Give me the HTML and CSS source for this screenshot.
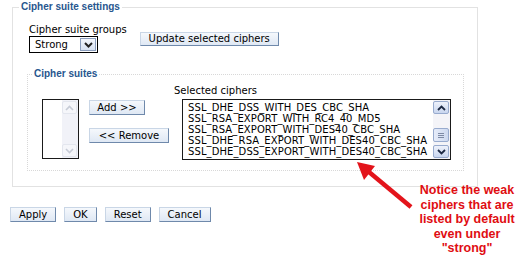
FILE: index.html
```html
<!DOCTYPE html>
<html lang="en">
<head>
    <meta charset="UTF-8">
    <title>SSL configuration - Cipher suites</title>
    <link rel="stylesheet" href="styles.css">
</head>
<body>

<div class="page">
    <fieldset class="group group-outer">
        <legend>Cipher suite settings</legend>

        <div class="group-row">
            <div class="field">
                <div class="field-label">Cipher suite groups</div>
                <div class="dropdown">
                    <span class="dropdown-value">Strong</span>
                    <span class="dropdown-btn">
                        <svg width="9" height="6" viewBox="0 0 9 6"><path d="M1 1 L4.5 4.5 L8 1" fill="none" stroke="#222" stroke-width="2"/></svg>
                    </span>
                </div>
            </div>
            <button class="btn btn-update">Update selected ciphers</button>
        </div>

        <fieldset class="group group-inner">
            <legend>Cipher suites</legend>
            <div class="suites">
                <div class="listbox listbox-available">
                    <div class="listbox-items"></div>
                    <div class="scrollbar scrollbar-disabled">
                        <span class="scroll-btn">
                            <svg width="9" height="6" viewBox="0 0 9 6"><path d="M1 5 L4.5 1.5 L8 5" fill="none" stroke="#c6cbd6" stroke-width="1.6"/></svg>
                        </span>
                        <span class="scroll-track"></span>
                        <span class="scroll-btn">
                            <svg width="9" height="6" viewBox="0 0 9 6"><path d="M1 1 L4.5 4.5 L8 1" fill="none" stroke="#c6cbd6" stroke-width="1.6"/></svg>
                        </span>
                    </div>
                </div>

                <div class="move-buttons">
                    <button class="btn btn-add">Add &gt;&gt;</button>
                    <button class="btn btn-remove">&lt;&lt; Remove</button>
                </div>

                <div class="selected">
                    <div class="field-label">Selected ciphers</div>
                    <div class="listbox listbox-selected">
                        <div class="listbox-items">
                            <div class="listbox-item">SSL_DHE_DSS_WITH_DES_CBC_SHA</div>
                            <div class="listbox-item">SSL_RSA_EXPORT_WITH_RC4_40_MD5</div>
                            <div class="listbox-item">SSL_RSA_EXPORT_WITH_DES40_CBC_SHA</div>
                            <div class="listbox-item">SSL_DHE_RSA_EXPORT_WITH_DES40_CBC_SHA</div>
                            <div class="listbox-item">SSL_DHE_DSS_EXPORT_WITH_DES40_CBC_SHA</div>
                        </div>
                        <div class="scrollbar">
                            <span class="scroll-btn">
                                <svg width="9" height="6" viewBox="0 0 9 6"><path d="M1 5 L4.5 1.5 L8 5" fill="none" stroke="#1d2a44" stroke-width="1.8"/></svg>
                            </span>
                            <span class="scroll-track">
                                <span class="scroll-thumb"></span>
                            </span>
                            <span class="scroll-btn">
                                <svg width="9" height="6" viewBox="0 0 9 6"><path d="M1 1 L4.5 4.5 L8 1" fill="none" stroke="#1d2a44" stroke-width="1.8"/></svg>
                            </span>
                        </div>
                    </div>
                </div>
            </div>
        </fieldset>
    </fieldset>

    <div class="form-buttons">
        <button class="btn">Apply</button>
        <button class="btn">OK</button>
        <button class="btn">Reset</button>
        <button class="btn">Cancel</button>
    </div>
</div>

<!-- annotation drawn over the screenshot -->
<svg class="callout-arrow" width="70" height="60" viewBox="350 155 70 60">
    <line x1="411" y1="207" x2="369" y2="172" stroke="#e3141b" stroke-width="4.5"/>
    <polygon points="357,162 375,166 364,180" fill="#e3141b"/>
</svg>
<div class="callout-text">Notice the weak ciphers that are listed by default even under "strong"</div>

</body>
</html>
```

FILE: styles.css
```css
body {
    margin: 0;
    padding: 0;
    background: #fff;
    font-family: "DejaVu Sans", Verdana, sans-serif;
    font-size: 10px;
    color: #000;
}

.page {
    padding: 1px 0 0 10px;
}

/* fieldsets */
.group {
    margin: 0;
    min-width: 0;
    box-sizing: border-box;
}
.group legend {
    padding: 0 2px;
    font-family: "Liberation Sans", Arial, sans-serif;
    font-size: 10px;
    font-weight: bold;
    line-height: 12px;
    color: #27568e;
}
.group-outer {
    margin-left: 2px;
    width: 466px;
    border: 1px solid #e2e2e2;
    padding: 0 13px 15px 14px;
}
.group-outer > legend {
    margin-left: -8px;
}
.group-inner {
    margin-top: 15px;
    width: 437px;
    border: 1px dotted #d8d8d8;
    padding: 5px 10px 10px 14px;
}
.group-inner > legend {
    margin-left: -10px;
}

.field-label {
    line-height: 12px;
    white-space: nowrap;
}

/* top row */
.group-row {
    display: flex;
    align-items: flex-start;
    padding: 11px 0 0 2px;
}
.field {
    display: flex;
    flex-direction: column;
}
.dropdown {
    width: 69px;
    height: 17px;
    box-sizing: border-box;
    border: 1px solid #000;
    display: flex;
    align-items: center;
    justify-content: space-between;
    padding: 0 1px 0 5px;
}
.dropdown-value {
    line-height: 12px;
}
.dropdown-btn {
    width: 16px;
    height: 13px;
    box-sizing: border-box;
    border: 1px solid #8a9dbd;
    background: linear-gradient(#f3f6fc, #d7e1f2);
    display: flex;
    align-items: center;
    justify-content: center;
}

/* buttons */
.btn {
    font-family: "DejaVu Sans", Verdana, sans-serif;
    font-size: 10px;
    line-height: 12px;
    height: 15px;
    padding: 0 8px;
    margin: 0;
    white-space: nowrap;
    color: #000;
    background: linear-gradient(#f5f8fc, #dfe8f4);
    border: 1px solid;
    border-color: #c9d6e6 #6f89ab #6f89ab #c9d6e6;
    border-radius: 0;
    cursor: pointer;
}
.btn-update {
    margin: 8px 0 0 13px;
    height: 14px;
    width: 139px;
    padding: 0;
}

/* cipher suites */
.suites {
    display: flex;
    align-items: flex-start;
}
.listbox {
    display: flex;
    box-sizing: border-box;
    border: 1px solid #1a1a1a;
    background: #fff;
    overflow: hidden;
}
.listbox-available {
    margin-top: 14px;
    width: 37px;
    height: 60px;
}
.listbox-selected {
    margin: 2px 0 0 8px;
    width: 269px;
    height: 61px;
}
.listbox-items {
    flex: 1;
    overflow: hidden;
    padding: 2px 0 0 5px;
}
.listbox-item {
    line-height: 11px;
    white-space: nowrap;
    letter-spacing: 0.1px;
}

.scrollbar {
    width: 16px;
    display: flex;
    flex-direction: column;
    padding: 1px 1px 1px 0;
    background: #f4f4f8;
}
.scroll-btn {
    height: 13px;
    box-sizing: border-box;
    border: 1px solid #98abce;
    border-radius: 2px;
    background: linear-gradient(#eef2fb, #c9d6ef);
    display: flex;
    align-items: center;
    justify-content: center;
}
.scroll-track {
    flex: 1;
    display: flex;
    flex-direction: column;
    justify-content: flex-end;
    padding-bottom: 3px;
}
.scroll-thumb {
    height: 14px;
    box-sizing: border-box;
    border: 1px solid #98abce;
    border-radius: 2px;
    background:
        linear-gradient(#7d8aa5, #7d8aa5) center 4px / 6px 1px no-repeat,
        linear-gradient(#7d8aa5, #7d8aa5) center 6px / 6px 1px no-repeat,
        linear-gradient(#7d8aa5, #7d8aa5) center 8px / 6px 1px no-repeat,
        linear-gradient(90deg, #e6ecf9, #cdd9f0);
}
.scrollbar-disabled {
    width: 15px;
    background: #f1f2f8;
}
.scrollbar-disabled .scroll-btn {
    border-color: #e3e6ee;
    background: #f5f6fa;
}

.move-buttons {
    display: flex;
    flex-direction: column;
    align-items: flex-start;
    gap: 13px;
    margin: 15px 0 0 10px;
}
.btn-add {
    width: 56px;
    padding: 0;
}
.btn-remove {
    width: 80px;
    padding: 0;
}

.selected {
    margin-left: 5px;
}

/* bottom buttons */
.form-buttons {
    display: flex;
    gap: 8px;
    margin-top: 20px;
}

/* red annotation */
.callout-arrow {
    position: absolute;
    left: 350px;
    top: 155px;
}
.callout-text {
    position: absolute;
    left: 409px;
    top: 183px;
    width: 116px;
    text-align: center;
    font-family: "Liberation Sans", Arial, sans-serif;
    font-size: 12.5px;
    font-weight: bold;
    line-height: 14.5px;
    color: #e00d12;
}
```
